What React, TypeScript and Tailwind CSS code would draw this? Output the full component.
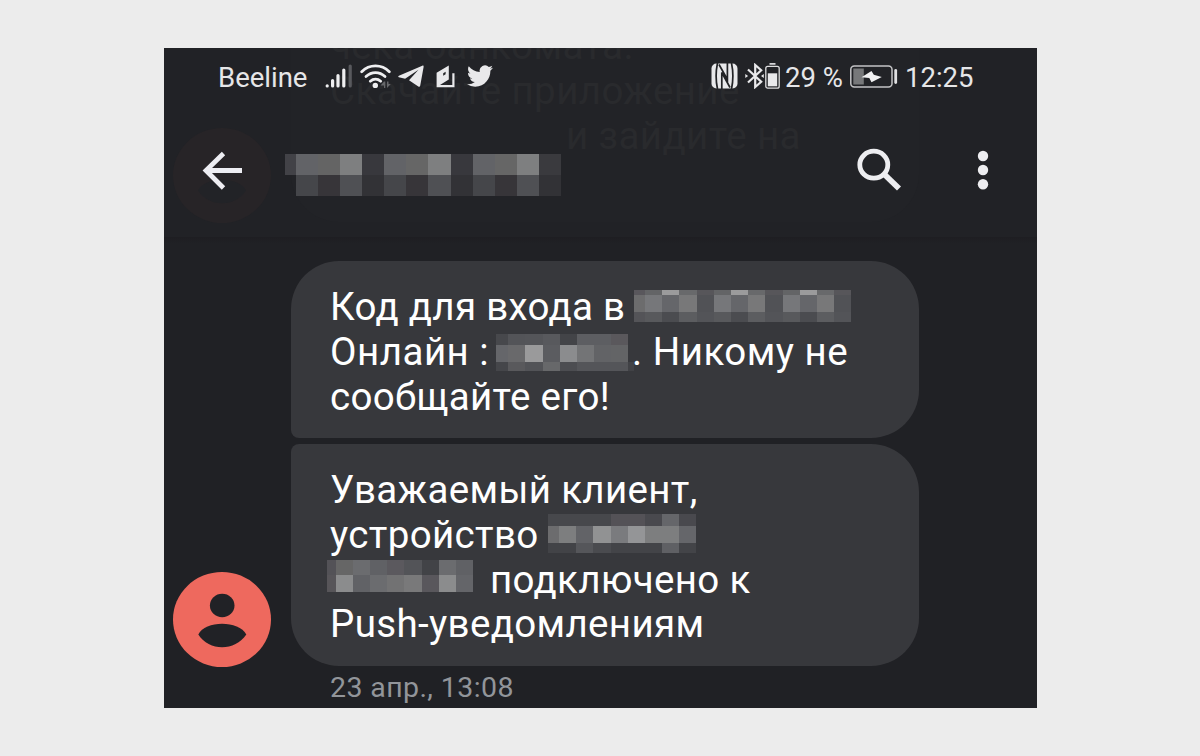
import type { ReactNode } from 'react';
import { clsx } from 'clsx';

type MosaicProps = {
  cols: number[];
  rows: number[];
  colors: string[][];
  className?: string;
};

const sum = (values: number[]) => values.reduce((a, b) => a + b, 0);

// Pixelated block that hides private data
function Mosaic({ cols, rows, colors, className }: MosaicProps) {
  const width = sum(cols);
  const height = sum(rows);

  return (
    <svg
      width={width}
      height={height}
      viewBox={`0 0 ${width} ${height}`}
      shapeRendering="crispEdges"
      className={clsx('shrink-0', className)}
      aria-hidden="true"
    >
      {colors.map((row, y) =>
        row.map((fill, x) => (
          <rect
            key={`${x}-${y}`}
            x={sum(cols.slice(0, x))}
            y={sum(rows.slice(0, y))}
            width={cols[x]}
            height={rows[y]}
            fill={fill}
          />
        )),
      )}
    </svg>
  );
}

const SENDER: MosaicProps = {
  cols: [11, 22, 22, 22, 22, 22, 22, 23, 22, 22, 22, 22, 22],
  rows: [21, 21],
  colors: [
    ['#424247', '#626367', '#646464', '#7e7f80', '#38383d', '#626367', '#666666', '#7e7f80', '#38383d', '#626367', '#666666', '#7e7f80', '#3a3a3e'],
    ['none', '#45464a', '#373539', '#4f5054', '#323236', '#45464a', '#373539', '#4f5054', '#323236', '#45464a', '#373539', '#4f5054', '#323236'],
  ],
};

const SERVICE: MosaicProps = {
  cols: [11, 17, 17, 18, 17, 17, 17, 17, 18, 17, 17, 17, 17],
  rows: [5, 17, 10],
  colors: [
    ['#59575c', '#636466', '#9b9b9c', '#68696b', '#57565a', '#636466', '#9b9b9c', '#68696b', '#57565a', '#636466', '#9b9b9c', '#68696b', '#57565a'],
    ['#6c6c6d', '#76777a', '#65666a', '#787879', '#515256', '#76777a', '#65666a', '#787879', '#515256', '#76777a', '#65666a', '#787879', '#515256'],
    ['#545458', '#58595c', '#4b4c50', '#5c5d60', '#535458', '#58595c', '#4b4c50', '#5c5d60', '#535458', '#58595c', '#4b4c50', '#5c5d60', '#535458'],
  ],
};

const CODE: MosaicProps = {
  cols: [12, 17, 18, 17, 17, 17, 17, 17, 6],
  rows: [11, 17, 9],
  colors: [
    ['#47484c', '#535458', '#545559', '#58595d', '#434448', '#5d5e62', '#5d5e62', '#5a585c', 'none'],
    ['#65666a', '#69696b', '#9a9a9b', '#5b5c60', '#8b8c8e', '#737476', '#626366', '#636466', 'none'],
    ['#45464a', '#59595c', '#525357', '#67686a', '#4c4d51', '#545559', '#545559', '#545559', '#414246'],
  ],
};

const DEVICE_TOP: MosaicProps = {
  cols: [11, 17, 17, 18, 17, 17, 17, 17, 17],
  rows: [12, 17, 10],
  colors: [
    ['#47484c', '#47484c', '#47484c', '#47484c', '#545257', '#545257', '#49494e', '#65666a', '#49494e'],
    ['#6c6c6e', '#7d7e7f', '#626367', '#919293', '#7a7b7e', '#949597', '#7d7e7f', '#7d7e7f', '#65666a'],
    ['#424347', '#424347', '#55565a', '#4a4b4f', '#434448', '#434448', '#434448', '#5f6064', '#434448'],
  ],
};

const DEVICE_BOTTOM: MosaicProps = {
  cols: [9, 17, 17, 17, 17, 18, 17, 17, 17],
  rows: [15, 17],
  colors: [
    ['#535257', '#666666', '#6b6c6f', '#606165', '#5b595e', '#535458', '#424347', '#6b6c6f', '#606165'],
    ['#575559', '#8b8c8d', '#616266', '#6b6c6f', '#727273', '#79797a', '#59575c', '#8b8c8d', '#646569'],
  ],
};

function SignalIcon({ className }: { className?: string }) {
  return (
    <svg width="28" height="25" viewBox="0 0 28 25" strokeWidth="3.2" strokeLinecap="round" className={className}>
      <path d="M2.2 21.8v.2M7.6 16.5V22M13 11.5V22M18.8 6V22" stroke="#efeff1" />
      <path d="M25.2 2V22" stroke="#58595d" />
    </svg>
  );
}

function WifiIcon({ className }: { className?: string }) {
  return (
    <svg width="31" height="25" viewBox="0 0 31 25" fill="none" className={className}>
      <g stroke="#efeff1" strokeWidth="2.8" strokeLinecap="round">
        <path d="M1.7 7.7C9.5-.1 21.5-.1 29.3 7.7" />
        <path d="M6 12.6c5.5-5.2 13.5-5.2 19 0" />
        <path d="M10.3 17.2c3.1-2.7 7.3-2.7 10.4 0" />
      </g>
      <circle cx="15.3" cy="21.4" r="2.7" fill="#efeff1" />
      <path d="m24 17.5-3.5 4H24V24h1.3v-6.5ZM27 17.5V24l3.8-4h-2.3v-2.5Z" fill="#66676a" />
    </svg>
  );
}

function TelegramIcon({ className }: { className?: string }) {
  return (
    <svg width="26" height="23" viewBox="0 0 26 23" fill="#e9e9eb" className={className}>
      <path d="M24.3.7.9 10.8c-.9.5-.9 1.1 0 1.4l6.2 1.5L20.5 4.8 11 15.3l9.3 6.2c1 .6 1.7.3 1.9-.8L25.6 1.9c.1-1.2-.4-1.6-1.3-1.2Z" />
    </svg>
  );
}

function BookIcon({ className }: { className?: string }) {
  return (
    <svg width="19" height="23" viewBox="0 0 19 23" className={className}>
      <path d="M.6 7.8 12.8.6V14.5L4 20H16.3V8.3h2.2v14H.6Z" fill="#e9e9eb" />
      <path d="M7.2 8.2 9.6 6.8v2.5L7.2 10.7Z" fill="#222326" />
    </svg>
  );
}

function TwitterIcon({ className }: { className?: string }) {
  return (
    <svg width="26" height="22" viewBox="0 2 24 20" preserveAspectRatio="none" fill="#e9e9eb" className={className}>
      <path d="M23.953 4.57a10 10 0 01-2.825.775 4.958 4.958 0 002.163-2.723c-.951.555-2.005.959-3.127 1.184a4.92 4.92 0 00-8.384 4.482C7.69 8.095 4.067 6.13 1.64 3.162a4.822 4.822 0 00-.666 2.475c0 1.71.87 3.213 2.188 4.096a4.904 4.904 0 01-2.228-.616v.06a4.923 4.923 0 003.946 4.827 4.996 4.996 0 01-2.212.085 4.936 4.936 0 004.604 3.417 9.867 9.867 0 01-6.102 2.105c-.39 0-.779-.023-1.17-.067a13.995 13.995 0 007.557 2.209c9.053 0 13.998-7.496 13.998-13.985 0-.21 0-.42-.015-.63A9.935 9.935 0 0024 4.59z" />
    </svg>
  );
}

function NfcIcon({ className }: { className?: string }) {
  return (
    <svg width="27" height="26" viewBox="0 0 27 26" className={className}>
      <rect x=".5" y=".5" width="26" height="25" rx="5" fill="#e9e9eb" />
      <g fill="none" stroke="#222326" strokeWidth="1.7">
        <path d="M6.500 0C4.800 8 4.800 18 6.500 26M20.500 0c1.700 8 1.700 18 0 26" />
        <path d="M10.800 26V9.500L19 24.500M16.400 0v16.500L8 1.500" />
      </g>
    </svg>
  );
}

function BluetoothIcon({ className }: { className?: string }) {
  return (
    <svg width="19" height="26" viewBox="0 0 19 26" fill="none" className={className}>
      <path d="M3 6.5 16.2 18.7 10.2 24V2l6 5.3L3 19.5" stroke="#e9e9eb" strokeWidth="2.2" />
      <path d="m.3 11 2.8 2-2.8 2ZM18.8 11 16 13l2.8 2Z" fill="#e9e9eb" />
    </svg>
  );
}

function DeviceBatteryIcon({ className }: { className?: string }) {
  return (
    <svg width="15" height="26" viewBox="0 0 15 26" className={className}>
      <path d="M4.5.9h6" stroke="#e9e9eb" strokeWidth="1.6" />
      <rect x=".8" y="3.3" width="13.4" height="21.9" rx="2" fill="none" stroke="#dededf" strokeWidth="1.3" />
      <path d="M2.8 10.3h9.4v13H2.8Z" fill="#e9e9eb" />
    </svg>
  );
}

function ChargingIcon({ className }: { className?: string }) {
  return (
    <svg width="48" height="23" viewBox="0 0 48 23" className={className}>
      <rect x=".8" y=".9" width="41.2" height="21" rx="3.5" fill="none" stroke="#c4c4c6" strokeWidth="1.5" />
      <path d="M3.3 3.5h10.5v16H3.3Z" fill="#77787a" />
      <path d="M11.500 12.200 21.500 6l2.300 3.800 8 2.200L21.500 17.300l-2.200-4.300Z" fill="#f2f2f3" />
      <path d="M45.7 5.5v12" stroke="#e0e0e2" strokeWidth="2.8" strokeLinecap="round" />
    </svg>
  );
}

function StatusBar() {
  return (
    <div className="flex h-[58px] items-center pl-[54px] text-[27.5px] leading-none text-[#e6e6e8]">
      <span className="relative top-px w-[90px] whitespace-nowrap">Beeline</span>
      <SignalIcon className="mb-[2px] ml-[17px]" />
      <WifiIcon className="mb-[2px] ml-[7px]" />
      <TelegramIcon className="mb-[2px] ml-[7px]" />
      <BookIcon className="mb-[2px] ml-[12px]" />
      <TwitterIcon className="mb-[2px] ml-[12px]" />
      <NfcIcon className="mb-[2px] ml-[218px]" />
      <BluetoothIcon className="mb-[2px] ml-[7px]" />
      <DeviceBatteryIcon className="mb-[2px] ml-[1px]" />
      <span className="relative top-px ml-[5px] w-[58px] whitespace-nowrap">29 %</span>
      <ChargingIcon className="mb-[2px] ml-[7px]" />
      <span className="relative top-px ml-[7px] whitespace-nowrap">12:25</span>
    </div>
  );
}

function Toolbar() {
  return (
    <div className="flex h-[131px] items-start">
      <svg width="41" height="40" viewBox="0 0 41 40" fill="none" stroke="#ededf2" strokeWidth="4.8" className="mt-[45px] ml-[38px]">
        <path d="M21.5 2.5 4 19.5l17.5 17.5M4 19.5h36" />
      </svg>
      <Mosaic {...SENDER} className="mt-[48px] ml-[42px]" />
      <svg width="45" height="43" viewBox="0 0 45 43" fill="none" stroke="#ededf0" className="mt-[42px] ml-[296px]">
        <ellipse cx="16.8" cy="16.7" rx="14" ry="13.5" strokeWidth="4.8" />
        <path d="M27.5 26.5 42 40.5" strokeWidth="5.8" />
      </svg>
      <svg width="12" height="40" viewBox="0 0 12 40" fill="#ededf0" className="mt-[44px] ml-[75px]">
        <circle cx="6" cy="6" r="5.2" />
        <circle cx="6" cy="20" r="5.2" />
        <circle cx="6" cy="34.3" r="5.2" />
      </svg>
    </div>
  );
}

// Previous message that faintly shows through the header
function ScrolledMessage() {
  return (
    <div className="absolute inset-0 overflow-hidden text-[38.5px] leading-[45px] tracking-[0.4px] text-[#292a2d]" aria-hidden="true">
      <div className="absolute top-0 left-[127px] h-[174px] w-[628px] rounded-b-[48px] bg-[#222327]" />
      <svg width="98" height="95" viewBox="0 0 98 95" className="absolute top-[80px] left-[9px]">
        <ellipse cx="49" cy="47.5" rx="49" ry="47.5" fill="#272427" />
        <path d="M25 62.5C32 48 66 48 73 62.5 62 79.5 36 79.5 25 62.5Z" fill="#222327" />
      </svg>
      <p className="absolute -top-[25px] left-[166px] whitespace-nowrap">чека банкомата.</p>
      <p className="absolute top-[20px] left-[166px] whitespace-nowrap">Скачайте приложение</p>
      <p className="absolute top-[65px] left-[402px] whitespace-nowrap">и зайдите на</p>
    </div>
  );
}

function Line({ children }: { children: ReactNode }) {
  return <div className="flex h-[44.8px] items-start whitespace-pre">{children}</div>;
}

export default function App() {
  return (
    <div className="flex h-[756px] w-[1200px] items-start overflow-hidden bg-[#ececec] pt-[48px] pl-[164px] font-['Roboto','Noto_Sans',sans-serif]">
      <div className="h-[660px] w-[873px] overflow-hidden bg-[#202125]">
        <header className="relative h-[189px] bg-[#212226]">
          <ScrolledMessage />
          <div className="relative">
            <StatusBar />
            <Toolbar />
          </div>
        </header>
        <div className="h-[7px] bg-gradient-to-b from-[#1e1e22] to-[#202125]" />

        <main className="flex pt-[17px]">
          <div className="flex h-[406px] w-[127px] shrink-0 items-end pl-[9px]">
            <svg width="98" height="95" viewBox="0 0 98 95">
              <ellipse cx="49" cy="47.5" rx="49" ry="47.5" fill="#ee695e" />
              <ellipse cx="49.2" cy="33.5" rx="12.3" ry="11.8" fill="#212226" />
              <path d="M25.3 62.5C32 48 66 48 73.3 62.5 62 79.5 36 79.5 25.3 62.5Z" fill="#212226" />
            </svg>
          </div>

          <div className="w-[628px] text-[38.5px] leading-[45px] tracking-[0.35px] text-white">
            <div className="h-[177px] rounded-[48px] rounded-bl-[8px] bg-[#37383c] pt-[23px] pl-[39px]">
              <Line>
                <span className="w-[295px] tracking-[0.3px]">Код для входа в</span>
                <Mosaic {...SERVICE} className="mt-[6px] ml-[9px]" />
              </Line>
              <Line>
                <span className="w-[159px] tracking-[0.5px]">Онлайн :</span>
                <Mosaic {...CODE} className="mt-[5px] ml-[7px]" />
                <span className="-ml-[2px] tracking-[0.5px]">. Никому не</span>
              </Line>
              <Line>сообщайте его!</Line>
            </div>
            <div className="mt-[6px] h-[222px] rounded-[48px] rounded-tl-[8px] bg-[#37383c] pt-[23px] pl-[39px]">
              <Line>Уважаемый клиент,</Line>
              <Line>
                <span className="w-[209px]">устройство</span>
                <Mosaic {...DEVICE_TOP} className="mt-[2px] ml-[9px]" />
              </Line>
              <Line>
                <Mosaic {...DEVICE_BOTTOM} className="mt-[3px] -ml-[3px]" />
                <span className="ml-[17px]">подключено к</span>
              </Line>
              <Line>Push-уведомлениям</Line>
            </div>
            <p className="pt-[5px] pl-[39px] text-[28.5px] leading-[34px] tracking-[0.4px] text-[#92959a]">23 апр., 13:08</p>
          </div>
        </main>
      </div>
    </div>
  );
}
